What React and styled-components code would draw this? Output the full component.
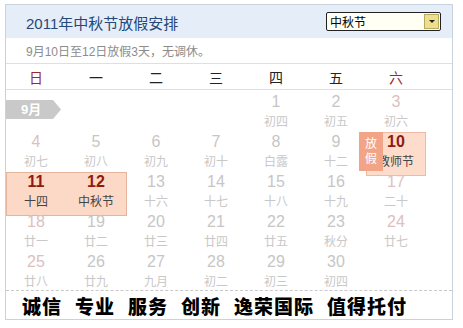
import React from 'react';
import styled, { createGlobalStyle } from 'styled-components';

const GlobalStyle = createGlobalStyle`
  body {
    margin: 0;
    background: #ffffff;
    font-family: 'Liberation Sans', 'Noto Sans CJK SC', sans-serif;
  }
`;

const Frame = styled.div`
  margin: 4px 0 0 5px;
  width: 446px;
  border: 1px solid #c9d3de;
  background: #ffffff;
`;

const Header = styled.div`
  height: 33px;
  box-sizing: border-box;
  background: #e5edf8;
  display: flex;
  align-items: center;
  justify-content: space-between;
  padding: 0 11px 0 20px;
`;

const Title = styled.div`
  font-size: 15px;
  color: #244877;
  margin-top: 1px;
`;

const Select = styled.div`
  width: 115px;
  height: 19px;
  box-sizing: border-box;
  border: 1px solid #222;
  border-radius: 2px;
  background: #fffff3;
  display: flex;
  align-items: center;
  justify-content: space-between;
  padding: 0 1px 0 3px;
  font-size: 12px;
  color: #000;
`;

const SelectArrow = styled.span`
  width: 15px;
  height: 15px;
  box-sizing: border-box;
  background: #eedf8c;
  border: 1px solid #b8a860;
  display: flex;
  align-items: center;
  justify-content: center;

  &::after {
    content: '';
    border-left: 3px solid transparent;
    border-right: 3px solid transparent;
    border-top: 3px solid #222;
  }
`;

const Notice = styled.div`
  height: 25px;
  border-bottom: 1px solid #dfdfdf;
  display: flex;
  align-items: center;
  padding-left: 20px;
  font-size: 12px;
  color: #8c8c8c;
`;

const WeekRow = styled.div`
  display: grid;
  grid-template-columns: repeat(7, 60px);
  height: 25px;
  border-bottom: 1px solid #dfdfdf;
`;

const WeekDay = styled.div`
  display: flex;
  align-items: center;
  justify-content: center;
  font-size: 14px;
  color: ${p => (p.$weekend ? '#9b2b2b' : '#222')};
`;

const Days = styled.div`
  display: grid;
  grid-template-columns: repeat(7, 60px);
  grid-auto-rows: 40px;
  border-bottom: 1px dashed #c8c8c8;
`;

const Cell = styled.div`
  position: relative;
  display: flex;
  flex-direction: column;
  align-items: center;
  z-index: ${p => (p.$marked ? 2 : 'auto')};
`;

const Num = styled.div`
  position: relative;
  z-index: 2;
  margin-top: 3px;
  line-height: 18px;
  font-size: 16px;
  font-weight: ${p => (p.$holiday ? 700 : 400)};
  color: ${p => (p.$holiday ? '#8c1b13' : p.$weekend ? '#dcc0c0' : '#c6c6c6')};
`;

const Lunar = styled.div`
  position: relative;
  z-index: 2;
  margin-top: 2px;
  line-height: 18px;
  font-size: 12px;
  color: ${p => (p.$holiday ? '#444' : '#c8c8c8')};
`;

const Highlight = styled.div`
  position: absolute;
  left: 0;
  top: 2px;
  width: ${p => p.$span * 60 + (p.$span > 1 ? 1 : 0)}px;
  height: 44px;
  box-sizing: border-box;
  background: ${p => (p.$soft ? '#fddccb' : '#fcd8c6')};
  border: 1px solid ${p => (p.$soft ? '#efbaa2' : '#e6b39c')};
  z-index: 1;
`;

const OffBadge = styled.div`
  position: absolute;
  left: -7px;
  top: 2px;
  width: 24px;
  height: 39px;
  background: #f2a486;
  color: #ffffff;
  font-size: 12px;
  line-height: 15px;
  display: flex;
  flex-direction: column;
  align-items: center;
  justify-content: center;
  z-index: 3;
`;

const MonthTag = styled.div`
  margin-top: 10px;
  align-self: flex-start;
  width: 55px;
  height: 19px;
  background: #c9c9c9;
  clip-path: polygon(0 0, 47px 0, 55px 50%, 47px 100%, 0 100%);
  color: #ffffff;
  font-size: 13px;
  font-weight: 700;
  line-height: 19px;
  padding-left: 15px;
  box-sizing: border-box;
`;

const Slogan = styled.div`
  height: 28px;
  display: flex;
  align-items: center;
  gap: 13px;
  padding-left: 16px;
  font-family: 'Noto Sans CJK SC', sans-serif;
  font-size: 19px;
  font-weight: 900;
  letter-spacing: 1px;
  color: #000;
`;

const weekNames = ['日', '一', '二', '三', '四', '五', '六'];

const lunar = [
  '初四', '初五', '初六', '初七', '初八', '初九', '初十', '白露', '十二', '教师节',
  '十四', '中秋节', '十六', '十七', '十八', '十九', '二十', '廿一', '廿二', '廿三',
  '廿四', '廿五', '秋分', '廿七', '廿八', '廿九', '九月', '初二', '初三', '初四',
];

const cells = [];
for (let i = 0; i < 4; i++) cells.push(null);
for (let d = 1; d <= 30; d++) cells.push({ day: d, lunar: lunar[d - 1] });

const slogans = ['诚信', '专业', '服务', '创新', '逸荣国际', '值得托付'];

const App = () => (
  <>
    <GlobalStyle />
    <Frame>
      <Header>
        <Title>2011年中秋节放假安排</Title>
        <Select>
          <span>中秋节</span>
          <SelectArrow />
        </Select>
      </Header>
      <Notice>9月10日至12日放假3天，无调休。</Notice>
      <WeekRow>
        {weekNames.map((w, i) => (
          <WeekDay key={w} $weekend={i === 0 || i === 6}>{w}</WeekDay>
        ))}
      </WeekRow>
      <Days>
        {cells.map((c, i) => {
          if (!c) {
            return <Cell key={`e${i}`}>{i === 0 && <MonthTag>9月</MonthTag>}</Cell>;
          }
          const col = i % 7;
          const holiday = c.day >= 10 && c.day <= 12;
          return (
            <Cell key={c.day} $marked={holiday}>
              {c.day === 10 && <Highlight $span={1} $soft />}
              {c.day === 10 && <OffBadge><span>放</span><span>假</span></OffBadge>}
              {c.day === 11 && <Highlight $span={2} />}
              <Num $holiday={holiday} $weekend={col === 0 || col === 6}>{c.day}</Num>
              <Lunar $holiday={holiday}>{c.lunar}</Lunar>
            </Cell>
          );
        })}
      </Days>
      <Slogan>
        {slogans.map(s => <span key={s}>{s}</span>)}
      </Slogan>
    </Frame>
  </>
);

export default App;
